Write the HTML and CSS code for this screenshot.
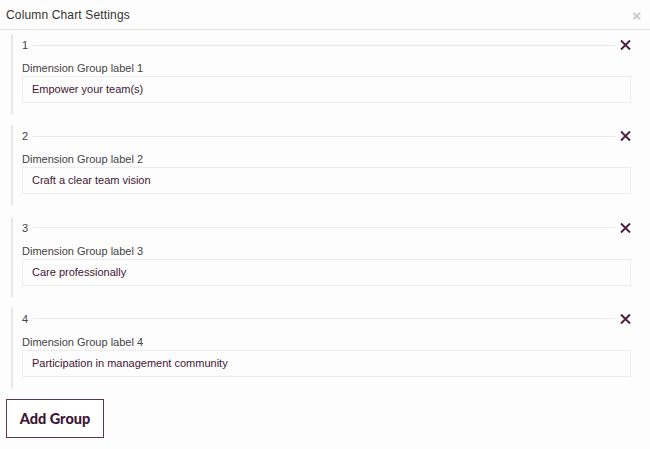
FILE: index.html
```html
<!DOCTYPE html>
<html>
<head>
<meta charset="utf-8">
<link rel="stylesheet" href="styles.css">
</head>
<body>
<div class="modal">
  <div class="header">
    <span class="title">Column Chart Settings</span>
    <span class="close">&times;</span>
  </div>
  <div class="groups">
    <div class="group">
      <div class="group-head">
        <span class="num">1</span>
        <span class="rule"></span>
        <svg class="remove" width="11" height="10" viewBox="0 0 11 10"><path d="M1 0.5 L10 9.5 M10 0.5 L1 9.5" stroke="#4a1f3f" stroke-width="2"/></svg>
      </div>
      <div class="label">Dimension Group label 1</div>
      <div class="input">Empower your team(s)</div>
    </div>
    <div class="group">
      <div class="group-head">
        <span class="num">2</span>
        <span class="rule"></span>
        <svg class="remove" width="11" height="10" viewBox="0 0 11 10"><path d="M1 0.5 L10 9.5 M10 0.5 L1 9.5" stroke="#4a1f3f" stroke-width="2"/></svg>
      </div>
      <div class="label">Dimension Group label 2</div>
      <div class="input">Craft a clear team vision</div>
    </div>
    <div class="group">
      <div class="group-head">
        <span class="num">3</span>
        <span class="rule"></span>
        <svg class="remove" width="11" height="10" viewBox="0 0 11 10"><path d="M1 0.5 L10 9.5 M10 0.5 L1 9.5" stroke="#4a1f3f" stroke-width="2"/></svg>
      </div>
      <div class="label">Dimension Group label 3</div>
      <div class="input">Care professionally</div>
    </div>
    <div class="group">
      <div class="group-head">
        <span class="num">4</span>
        <span class="rule"></span>
        <svg class="remove" width="11" height="10" viewBox="0 0 11 10"><path d="M1 0.5 L10 9.5 M10 0.5 L1 9.5" stroke="#4a1f3f" stroke-width="2"/></svg>
      </div>
      <div class="label">Dimension Group label 4</div>
      <div class="input">Participation in management community</div>
    </div>
  </div>
  <div class="actions">
    <button class="add">Add Group</button>
  </div>
</div>
</body>
</html>
```
FILE: styles.css
```css
html, body {
  margin: 0;
  padding: 0;
  background: #fdfdfd;
  font-family: "Liberation Sans", Arial, sans-serif;
}
.modal {
  width: 650px;
  height: 449px;
}
.header {
  height: 29px;
  border-bottom: 1px solid #e2e2e2;
  display: flex;
  align-items: center;
  justify-content: space-between;
  padding: 0 9px 0 6px;
}
.title {
  font-size: 12px;
  color: #333;
  letter-spacing: 0.15px;
}
.close {
  color: #c4c4c4;
  font-size: 15px;
  font-weight: bold;
  margin-top: 2px;
}
.groups {
  padding: 4px 0 0 11px;
}
.group {
  border-left: 2px solid #e6e6e6;
  padding: 4px 19px 11px 9px;
  margin-bottom: 11.33px;
}
.group-head {
  display: flex;
  align-items: center;
  height: 14px;
}
.num {
  font-size: 11px;
  color: #444;
  width: 11px;
}
.rule {
  flex: 1;
  height: 1px;
  background: #e8e8e8;
}
.remove {
  margin-left: 5px;
  display: block;
}
.label {
  margin-top: 8px;
  font-size: 11px;
  line-height: 16px;
  color: #444;
}
.input {
  height: 25px;
  border: 1px solid #ececec;
  background: #fdfdfd;
  font-size: 11px;
  line-height: 25px;
  padding-left: 9px;
  color: #3f1636;
}
.actions {
  padding: 0 6px;
}
.add {
  width: 98px;
  height: 39px;
  border: 1px solid #5b3553;
  background: #fff;
  color: #3d1735;
  font-family: "Lato", sans-serif;
  font-weight: 900;
  font-size: 14.5px;
  padding: 0;
  border-radius: 0;
}
```
